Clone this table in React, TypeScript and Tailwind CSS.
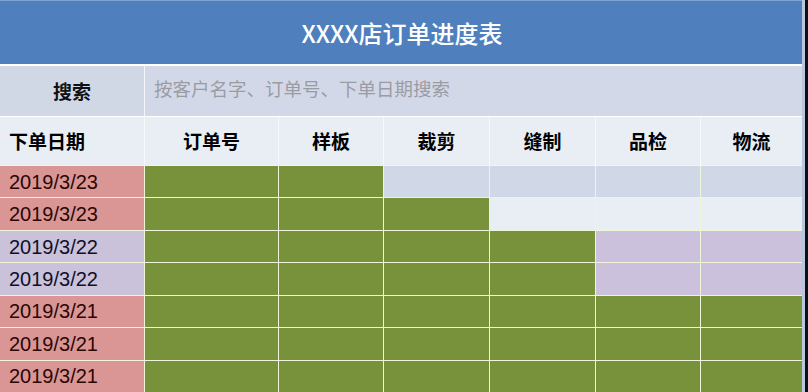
const COLS = ["订单号", "样板", "裁剪", "缝制", "品检", "物流"];

const ROWS = [
  { date: "2019/3/23", done: 2, tone: "pink", empty: "bg-[#d0d8e8]" },
  { date: "2019/3/23", done: 3, tone: "pink", empty: "bg-[#e9edf4]" },
  { date: "2019/3/22", done: 4, tone: "lav", empty: "bg-[#cbc1dc]" },
  { date: "2019/3/22", done: 4, tone: "lav", empty: "bg-[#cbc1dc]" },
  { date: "2019/3/21", done: 6, tone: "pink", empty: "bg-[#d0d8e8]" },
  { date: "2019/3/21", done: 6, tone: "pink", empty: "bg-[#d0d8e8]" },
  { date: "2019/3/21", done: 6, tone: "pink", empty: "bg-[#d0d8e8]" },
];

const cjk = { fontFamily: '"Noto Sans CJK SC", "Noto Sans", sans-serif' };

export default function App() {
  return (
    <div className="flex w-[808px] h-[392px] bg-white overflow-hidden">
      <div className="flex flex-col w-[802px] shrink-0">
        {/* Title */}
        <div
          className="h-[64px] shrink-0 flex items-center justify-center pl-[2px] bg-[#4f7fbd] border-t border-[#7fa3d2] text-white text-[24px] font-medium"
          style={cjk}
        >
          XXXX店订单进度表
        </div>
        <div className="h-[2px] shrink-0 bg-white" />

        {/* Search */}
        <div className="h-[50px] shrink-0 grid grid-cols-[144px_1fr] gap-px bg-[#f4f6fa]">
          <div className="flex items-center justify-center bg-[#d0d8e6] text-[19px] font-bold text-[#111]" style={cjk}>
            搜索
          </div>
          <div className="flex items-center pl-[9px] pb-[4px] bg-[#d3d8e8] text-[18.5px] text-[#9a9ca4]" style={cjk}>
            按客户名字、订单号、下单日期搜索
          </div>
        </div>
        <div className="h-px shrink-0 bg-white" />

        {/* Header */}
        <div
          className="h-[48px] shrink-0 grid grid-cols-[144px_133px_104px_105px_105px_104px_1fr] gap-px bg-[#f7f9fc]"
          style={cjk}
        >
          <div className="flex items-center pl-[9px] bg-[#e9edf4] text-[19px] font-bold text-black">下单日期</div>
          {COLS.map((c) => (
            <div key={c} className="flex items-center justify-center bg-[#e9edf4] text-[19px] font-bold text-black">
              {c}
            </div>
          ))}
        </div>
        <div className="h-px shrink-0 bg-[#f2f4f0]" />

        {/* Data rows */}
        <div className="flex-1 grid grid-cols-[144px_133px_104px_105px_105px_104px_1fr] grid-rows-7 gap-px bg-[#eef5d8]">
          {ROWS.map((r, i) => (
            <Row key={i} {...r} />
          ))}
        </div>
      </div>
      <div className="w-[3px] shrink-0 bg-[#b9c6dc]" />
      <div className="flex-1 bg-[#0b0f1c]" />
    </div>
  );
}

function Row({ date, done, tone, empty }: { date: string; done: number; tone: string; empty: string }) {
  return (
    <>
      <div
        className={`flex items-center pl-[9px] text-[20px] ${
          tone === "pink" ? "bg-[#d99694] text-[#2b0606]" : "bg-[#cac1da] text-[#10102a]"
        }`}
        style={{ fontFamily: '"Liberation Sans", Arial, sans-serif' }}
      >
        {date}
      </div>
      {COLS.map((c, j) => (
        <div key={c} className={j < done ? "bg-[#77923b]" : empty} />
      ))}
    </>
  );
}
